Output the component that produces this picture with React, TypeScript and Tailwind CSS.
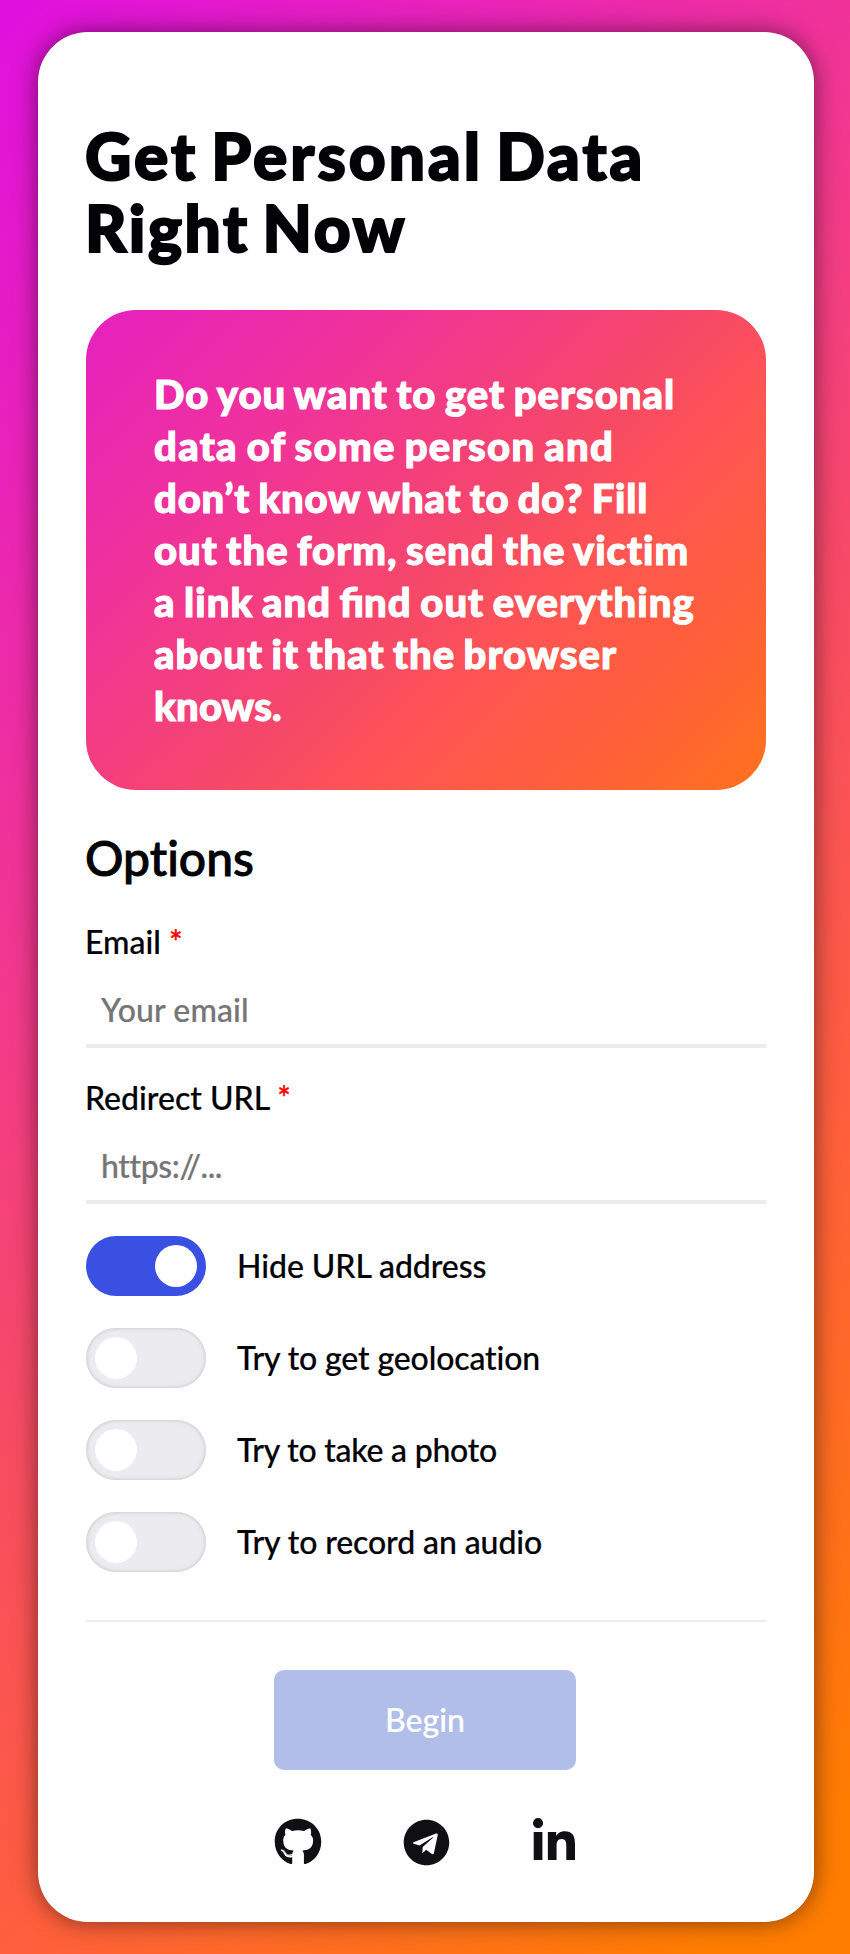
import { FaGithub, FaTelegram, FaLinkedinIn } from "react-icons/fa";

function Field({ label, placeholder, tracking }: { label: string; placeholder: string; tracking: string }) {
  return (
    <label className="flex flex-col">
      <span className="-ml-px h-10 leading-10">
        {label} <span className="text-[#ff0000] [-webkit-text-stroke:0.4px]">*</span>
      </span>
      <input
        placeholder={placeholder}
        className={`mt-3 h-[74px] w-full border-b-4 border-[#ebebf0] pr-4 pl-[15px] outline-none [font-variant-ligatures:none] placeholder:text-[#757575] ${tracking}`}
      />
    </label>
  );
}

function Toggle({ label, on = false, tracking = "tracking-[-0.1px]" }: { label: string; on?: boolean; tracking?: string }) {
  return (
    <div className="flex h-[60px] items-center">
      <span
        className={
          on
            ? "flex h-[60px] w-[120px] items-center justify-end rounded-full bg-[#3a50e2] px-[9px]"
            : "flex h-[60px] w-[120px] items-center rounded-full bg-[#ebebf0] px-[9px] shadow-[inset_0_0_4px_rgba(0,0,0,0.2)]"
        }
      >
        <span className="size-[42px] rounded-full bg-white" />
      </span>
      <span className={`ml-[31px] ${tracking}`}>{label}</span>
    </div>
  );
}

export default function App() {
  return (
    <div className="flex h-[1954px] w-[850px] bg-[linear-gradient(135deg,#e010e0_0%,#f0329b_30%,#f84c62_52%,#ff5f3c_70%,#ff7d00_95%)] pt-8 pl-[38px] font-['Lato',sans-serif] text-[32px] font-medium text-[#020207] [-webkit-text-stroke:0.2px]">
      <main className="flex h-[1890px] w-[776px] flex-col rounded-[50px] bg-white px-12 shadow-[0_0_25px_rgba(0,0,0,0.5)]">
        <h1 className="mt-[88px] -ml-px text-[64px] leading-[72px] font-black [-webkit-text-stroke:2px]">
          <span className="block tracking-[3px] [word-spacing:-5px] whitespace-nowrap">Get Personal Data</span>
          <span className="block tracking-[2.6px] [word-spacing:-5px] whitespace-nowrap">Right Now</span>
        </h1>
        <section className="mt-[46px] h-[480px] rounded-[50px] bg-[linear-gradient(135deg,#e620c0_0%,#f0329b_26%,#f64868_53%,#ff5553_66%,#ff6038_83%,#ff7020_98%)] px-[68px] pt-[58px] text-[40px] leading-[52px] font-black text-white [-webkit-text-stroke:1.1px] [word-spacing:-2px]">
          <span className="block tracking-[1px] whitespace-nowrap">Do you want to get personal</span>
          <span className="block tracking-[1.33px] whitespace-nowrap">data of some person and</span>
          <span className="block tracking-[0.8px] whitespace-nowrap">don’t know what to do? Fill</span>
          <span className="block tracking-[1px] whitespace-nowrap">out the form, send the victim</span>
          <span className="block tracking-[1.05px] whitespace-nowrap">
            a link and <span className="tracking-normal">fi</span>nd out everything
          </span>
          <span className="block tracking-[0.98px] whitespace-nowrap">about it that the browser</span>
          <span className="block tracking-[0.2px] whitespace-nowrap">knows.</span>
        </section>
        <h2 className="mt-[38px] -ml-px text-[48px] leading-[60px] [font-variant-ligatures:none] [-webkit-text-stroke:0.9px]">Options</h2>
        <div className="mt-[34px] flex flex-col gap-[30px]">
          <Field label="Email" placeholder="Your email" tracking="tracking-[0.1px]" />
          <Field label="Redirect URL" placeholder="https://..." tracking="tracking-[-0.4px]" />
        </div>
        <div className="mt-8 flex flex-col gap-8 [font-variant-ligatures:none]">
          <Toggle label="Hide URL address" on tracking="tracking-[-0.05px]" />
          <Toggle label="Try to get geolocation" tracking="tracking-[-0.13px]" />
          <Toggle label="Try to take a photo" tracking="tracking-[-0.25px]" />
          <Toggle label="Try to record an audio" />
        </div>
        <hr className="mt-12 border-t-2 border-[#ebebf0]" />
        <button className="mt-12 mr-0.5 h-[100px] w-[302px] self-center rounded-[10px] bg-[#b0bee9] text-white">Begin</button>
        <nav className="mt-12 flex w-[304px] items-center justify-between self-center text-[#101014] [-webkit-text-stroke:0]">
          <FaGithub size={48} />
          <FaTelegram size={47} />
          <FaLinkedinIn size={48} />
        </nav>
      </main>
    </div>
  );
}
